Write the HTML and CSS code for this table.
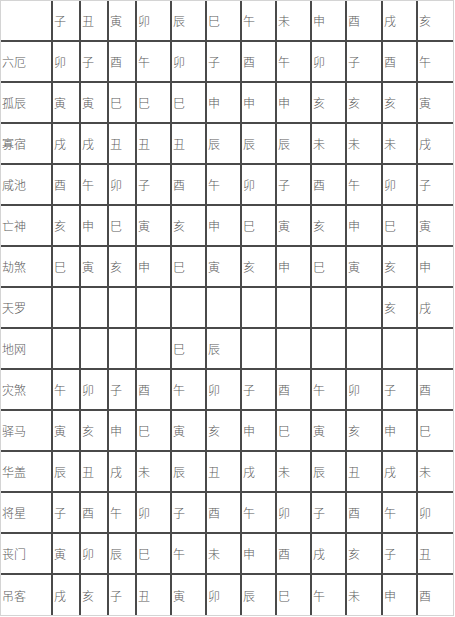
FILE: index.html
```html
<!DOCTYPE html>
<html lang="zh">
<head>
<meta charset="utf-8">
<title>神煞表</title>
<link rel="stylesheet" href="styles.css">
</head>
<body>
<div class="grid">
  <div class="row"><span></span><span>子</span><span>丑</span><span>寅</span><span>卯</span><span>辰</span><span>巳</span><span>午</span><span>未</span><span>申</span><span>酉</span><span>戌</span><span>亥</span></div>
  <div class="row"><span>六厄</span><span>卯</span><span>子</span><span>酉</span><span>午</span><span>卯</span><span>子</span><span>酉</span><span>午</span><span>卯</span><span>子</span><span>酉</span><span>午</span></div>
  <div class="row"><span>孤辰</span><span>寅</span><span>寅</span><span>巳</span><span>巳</span><span>巳</span><span>申</span><span>申</span><span>申</span><span>亥</span><span>亥</span><span>亥</span><span>寅</span></div>
  <div class="row"><span>寡宿</span><span>戌</span><span>戌</span><span>丑</span><span>丑</span><span>丑</span><span>辰</span><span>辰</span><span>辰</span><span>未</span><span>未</span><span>未</span><span>戌</span></div>
  <div class="row"><span>咸池</span><span>酉</span><span>午</span><span>卯</span><span>子</span><span>酉</span><span>午</span><span>卯</span><span>子</span><span>酉</span><span>午</span><span>卯</span><span>子</span></div>
  <div class="row"><span>亡神</span><span>亥</span><span>申</span><span>巳</span><span>寅</span><span>亥</span><span>申</span><span>巳</span><span>寅</span><span>亥</span><span>申</span><span>巳</span><span>寅</span></div>
  <div class="row"><span>劫煞</span><span>巳</span><span>寅</span><span>亥</span><span>申</span><span>巳</span><span>寅</span><span>亥</span><span>申</span><span>巳</span><span>寅</span><span>亥</span><span>申</span></div>
  <div class="row"><span>天罗</span><span></span><span></span><span></span><span></span><span></span><span></span><span></span><span></span><span></span><span></span><span>亥</span><span>戌</span></div>
  <div class="row"><span>地网</span><span></span><span></span><span></span><span></span><span>巳</span><span>辰</span><span></span><span></span><span></span><span></span><span></span><span></span></div>
  <div class="row"><span>灾煞</span><span>午</span><span>卯</span><span>子</span><span>酉</span><span>午</span><span>卯</span><span>子</span><span>酉</span><span>午</span><span>卯</span><span>子</span><span>酉</span></div>
  <div class="row"><span>驿马</span><span>寅</span><span>亥</span><span>申</span><span>巳</span><span>寅</span><span>亥</span><span>申</span><span>巳</span><span>寅</span><span>亥</span><span>申</span><span>巳</span></div>
  <div class="row"><span>华盖</span><span>辰</span><span>丑</span><span>戌</span><span>未</span><span>辰</span><span>丑</span><span>戌</span><span>未</span><span>辰</span><span>丑</span><span>戌</span><span>未</span></div>
  <div class="row"><span>将星</span><span>子</span><span>酉</span><span>午</span><span>卯</span><span>子</span><span>酉</span><span>午</span><span>卯</span><span>子</span><span>酉</span><span>午</span><span>卯</span></div>
  <div class="row"><span>丧门</span><span>寅</span><span>卯</span><span>辰</span><span>巳</span><span>午</span><span>未</span><span>申</span><span>酉</span><span>戌</span><span>亥</span><span>子</span><span>丑</span></div>
  <div class="row"><span>吊客</span><span>戌</span><span>亥</span><span>子</span><span>丑</span><span>寅</span><span>卯</span><span>辰</span><span>巳</span><span>午</span><span>未</span><span>申</span><span>酉</span></div>
</div>
</body>
</html>
```
FILE: styles.css
```css
html, body {
  margin: 0;
  padding: 0;
  background: #fff;
}
.grid {
  width: 454px;
  box-sizing: border-box;
  border: 1px solid #d4d4d4;
  font-family: "Noto Sans CJK SC", "Noto Sans", sans-serif;
  font-size: 12px;
  font-weight: 300;
  color: #5c5c5c;
  display: flex;
  flex-direction: column;
}
.row {
  display: grid;
  grid-template-columns: 52px 28px 28px 28px 35px 35px 35px 35px 35px 35px 36px 35px 35px;
  height: 41px;
}
.row span {
  box-sizing: border-box;
  border-right: 2px solid #4a4a4a;
  border-bottom: 2px solid #4a4a4a;
  padding-left: 1px;
  display: flex;
  align-items: center;
  white-space: nowrap;
  overflow: hidden;
}
.row span:last-child { border-right: none; }
.row:last-child { height: 40px; }
.row:last-child span { border-bottom: none; }
```
